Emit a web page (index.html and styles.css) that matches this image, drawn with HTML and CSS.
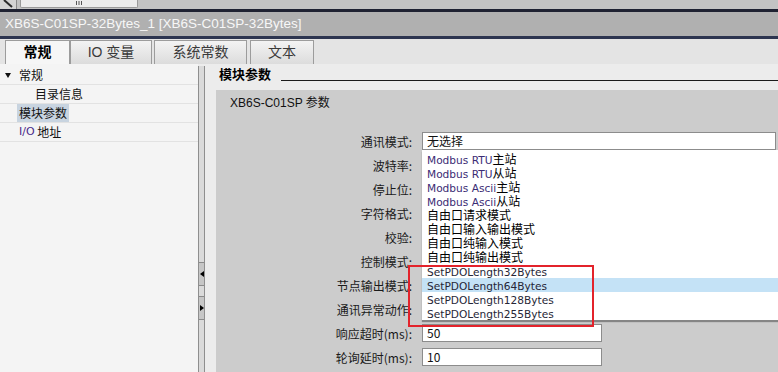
FILE: index.html
```html
<!DOCTYPE html>
<html lang="zh">
<head>
<meta charset="utf-8">
<title>XB6S-C01SP-32Bytes_1</title>
<link rel="stylesheet" href="styles.css">
</head>
<body>
<div class="app">
  <div class="topstrip">
    <div class="corner">
      <svg width="16" height="9" viewBox="0 0 16 9"><path d="M4 0 L12 7" stroke="#2a2a2a" stroke-width="2" fill="none"/></svg>
    </div>
    <div class="hthumb">
      <svg width="8" height="6" viewBox="0 0 8 6"><path d="M1.5 1V5M4 1V5M6.5 1V5" stroke="#555" stroke-width="1" fill="none"/></svg>
    </div>
  </div>
  <div class="rule-top"></div>
  <div class="titlebar">XB6S-C01SP-32Bytes_1 [XB6S-C01SP-32Bytes]</div>
  <div class="rule-bottom"></div>
  <div class="tabbar">
    <div class="tab tab-general active">常规</div>
    <div class="tab tab-io">IO 变量</div>
    <div class="tab tab-sys">系统常数</div>
    <div class="tab tab-text">文本</div>
  </div>
  <div class="body">
    <nav class="tree">
      <div class="row"><span class="caret"></span>常规</div>
      <div class="row sub">目录信息</div>
      <div class="row"><span class="sel">模块参数</span></div>
      <div class="row"><span class="io">I/O</span>&nbsp;地址</div>
    </nav>
    <div class="splitter">
      <div class="sbtn"><span class="arr-left"></span></div>
      <div class="sbtn"><span class="arr-right"></span></div>
    </div>
    <main class="content">
      <div class="sect-head"><h2>模块参数</h2><div class="sect-line"></div></div>
      <div class="panel">
        <div class="panel-title">XB6S-C01SP 参数</div>
        <div class="form">
          <div class="frow"><label>通讯模式:</label><div class="field wide">无选择</div></div>
          <div class="frow"><label>波特率:</label><div class="field"></div></div>
          <div class="frow"><label>停止位:</label><div class="field"></div></div>
          <div class="frow"><label>字符格式:</label><div class="field"></div></div>
          <div class="frow"><label>校验:</label><div class="field"></div></div>
          <div class="frow"><label>控制模式:</label><div class="field"></div></div>
          <div class="frow"><label>节点输出模式:</label><div class="field"></div></div>
          <div class="frow"><label>通讯异常动作:</label><div class="field"></div></div>
          <div class="frow"><label>响应超时(ms):</label><div class="field">50</div></div>
          <div class="frow"><label>轮询延时(ms):</label><div class="field">10</div></div>

          <ul class="dropdown">
            <li class="mb"><span class="lat">Modbus RTU</span>主站</li>
            <li class="mb"><span class="lat">Modbus RTU</span>从站</li>
            <li class="mb"><span class="lat">Modbus Ascii</span>主站</li>
            <li class="mb"><span class="lat">Modbus Ascii</span>从站</li>
            <li>自由口请求模式</li>
            <li>自由口输入输出模式</li>
            <li>自由口纯输入模式</li>
            <li>自由口纯输出模式</li>
            <li class="pdo"><span class="lat">SetPDOLength32Bytes</span></li>
            <li class="pdo hl"><span class="lat">SetPDOLength64Bytes</span></li>
            <li class="pdo"><span class="lat">SetPDOLength128Bytes</span></li>
            <li class="pdo"><span class="lat">SetPDOLength255Bytes</span></li>
          </ul>
          <div class="redbox"></div>
        </div>
      </div>
    </main>
  </div>
</div>
</body>
</html>
```

FILE: styles.css
```css
* { box-sizing: border-box; margin: 0; padding: 0; }
html, body { width: 778px; height: 372px; overflow: hidden; }
body {
  font-family: "Noto Sans CJK SC", "Liberation Sans", sans-serif;
  font-size: 12px;
  color: #111;
  background: #ececec;
}
.app { width: 778px; height: 372px; display: flex; flex-direction: column; overflow: hidden; }

/* top scroll strip */
.topstrip { height: 9px; background: #c3c3c3; display: flex; align-items: flex-start; flex: none; }
.corner { width: 17px; height: 9px; background: #d4d4d4; border-right: 1px solid #8a8a8a; }
.corner svg { display: block; }
.hthumb {
  margin-left: 3px; width: 118px; height: 8px;
  background: #ececec; border: 1px solid #9a9a9a; border-top: none;
  border-radius: 0 0 2px 2px;
  display: flex; justify-content: center; align-items: flex-start;
}
.hthumb svg { display: block; }

.rule-top { height: 3px; background: #1f2232; flex: none; }
.rule-bottom { height: 3px; background: #2d3550; flex: none; }
.titlebar {
  height: 24px; flex: none; background: #b0b0b0; color: #f7f7f7;
  font-family: "Liberation Sans", sans-serif; font-size: 13.5px;
  line-height: 24px; padding-left: 5px; white-space: nowrap;
}

/* tabs */
.tabbar {
  height: 25px; flex: none; background: #e4e4e4;
  display: flex; align-items: flex-end; padding-left: 5px;
}
.tab {
  height: 24px; border: 1px solid #9c9c9c; border-bottom: none;
  background: linear-gradient(#f3f3f3, #dcdcdc);
  font-family: "Liberation Sans", "Noto Sans CJK SC", sans-serif;
  font-size: 14px; line-height: 22px; text-align: center; color: #3a3a3a;
}
.tab.active { background: #f6f6f6; font-weight: bold; color: #000; }
.tab-general { width: 65px; }
.tab-io { width: 82px; margin-right: 2px; }
.tab-sys { width: 93px; margin-right: 3px; }
.tab-text { width: 64px; }

/* body */
.body { flex: 1; display: flex; min-height: 0; }
.tree { width: 198px; flex: none; background: #f4f4f4; padding-top: 2px; }
.row {
  height: 19px; border-bottom: 1px solid #e2e2e2;
  display: flex; align-items: center; padding-left: 19px; line-height: 18px;
  white-space: nowrap;
}
.row:first-child { padding-left: 5px; }
.row.sub { padding-left: 35px; }
.caret {
  width: 0; height: 0; margin-right: 8px;
  border-left: 3.5px solid transparent; border-right: 3.5px solid transparent;
  border-top: 5px solid #111;
}
.sel { background: #c8d4e0; padding: 0 2px; margin-left: -2px; }
.io { font-family: "DejaVu Sans", sans-serif; font-size: 11px; color: #4a2a8a; }

.splitter {
  width: 7px; flex: none; margin-top: 2px;
  background: #dadada; border-left: 1px solid #8e8e8e; border-right: 1px solid #8e8e8e;
  display: flex; flex-direction: column; gap: 10px; padding-top: 196px;
}
.sbtn {
  height: 24px; background: #c6c6c6;
  border-top: 1px solid #8a8a8a; border-bottom: 1px solid #8a8a8a;
  display: flex; align-items: center; justify-content: center;
}
.arr-left { width: 0; height: 0; border-top: 3px solid transparent; border-bottom: 3px solid transparent; border-right: 4px solid #000; }
.arr-right { width: 0; height: 0; border-top: 3px solid transparent; border-bottom: 3px solid transparent; border-left: 4px solid #000; }

/* content */
.content { flex: 1; background: #ececec; display: flex; flex-direction: column; min-width: 0; }
.sect-head { height: 26px; flex: none; display: flex; align-items: flex-start; padding-top: 3px; padding-left: 14px; }
.sect-head h2 { font-size: 13px; font-weight: bold; line-height: 14px; white-space: nowrap; color: #000; }
.sect-line { flex: 1; height: 1px; background: #1a1a1a; margin-top: 13px; margin-left: 10px; }

.panel { flex: 1; margin-left: 11px; background: #cccccc; }
.panel-title {
  height: 26px; padding-left: 14px; line-height: 26px;
  font-family: "Liberation Sans", "Noto Sans CJK SC", sans-serif; font-size: 12px; color: #111;
}
.form { position: relative; padding-top: 13px; }
.frow { height: 24px; display: flex; align-items: center; }
.frow label { width: 196px; text-align: right; white-space: nowrap; color: #1a1a1a; }
.field {
  margin-left: 10px; width: 180px; height: 18px; background: #fff;
  border: 1px solid #8c8c8c; padding-left: 4px; line-height: 16px; color: #111;
}
.field.wide { width: 354px; }

.dropdown {
  position: absolute; left: 206px; top: 34px; width: 356px;
  background: #fff; list-style: none; padding-top: 2px;
  box-shadow: 0 2px 1px rgba(0,0,0,0.35);
}
.dropdown li { height: 14px; line-height: 14px; padding-left: 5px; white-space: nowrap; color: #000; }
.dropdown .lat { font-family: "DejaVu Sans", sans-serif; font-size: 10.6px; }
.dropdown .mb .lat { color: #3b2c74; }
.dropdown .pdo { color: #262636; }
.dropdown .hl { background: #c4e2f6; }

.redbox {
  position: absolute; left: 192px; top: 149px; width: 186px; height: 62px;
  border: 2px solid #e3232b;
}
```
